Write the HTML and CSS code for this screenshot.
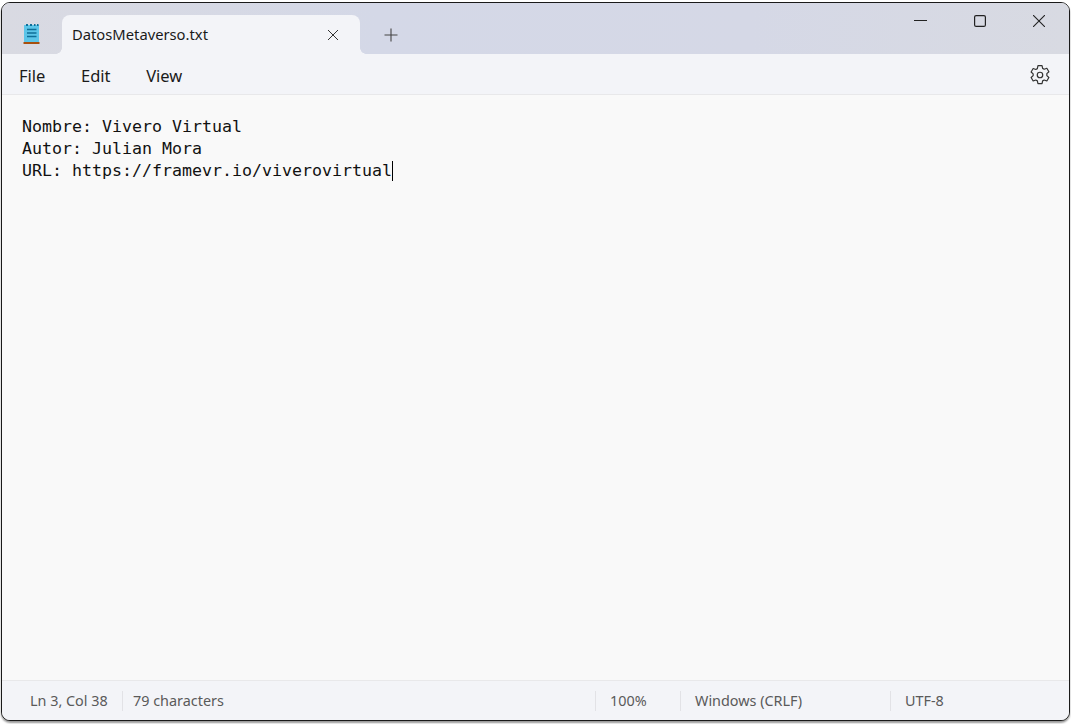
FILE: index.html
```html
<!DOCTYPE html>
<html lang="en">
<head>
<meta charset="utf-8">
<title>DatosMetaverso.txt</title>
<link rel="stylesheet" href="styles.css">
</head>
<body>
<div class="window">
  <header class="titlebar">
    <div class="app-icon">
      <svg width="18" height="22" viewBox="0 0 18 22">
        <rect x="1" y="2" width="15" height="17" fill="#5cc5e8"/>
        <rect x="0.500" y="19" width="16" height="2" fill="#a8500f"/>
        <path d="M3 1h2v2H3zM7 1h2v2H7zM11 1h1.500v2H11zM14 1h1.500v2H14z" fill="#0f6f98"/>
        <path d="M4 6.500h9.500M4 10h9.500M4 13.500h9.500" stroke="#0f6f98" stroke-width="1.500" fill="none"/>
      </svg>
    </div>
    <div class="tab">
      <span class="tab-title">DatosMetaverso.txt</span>
      <svg class="tab-close" width="12" height="12" viewBox="0 0 12 12"><path d="M1 1l10 10M11 1L1 11" stroke="#333" stroke-width="1" fill="none"/></svg>
    </div>
    <div class="new-tab">
      <svg width="14" height="14" viewBox="0 0 14 14"><path d="M7 0.500v13M0.500 7h13" stroke="#444" stroke-width="1.100" fill="none"/></svg>
    </div>
    <div class="caption">
      <button class="cap-btn"><svg width="13" height="12" viewBox="0 0 13 12"><path d="M0 5.500h13" stroke="#222" stroke-width="1.200"/></svg></button>
      <button class="cap-btn"><svg width="12" height="12" viewBox="0 0 12 12"><rect x="0.600" y="0.600" width="10.800" height="10.800" rx="1.500" fill="none" stroke="#222" stroke-width="1.200"/></svg></button>
      <button class="cap-btn"><svg width="12" height="12" viewBox="0 0 12 12"><path d="M0 0l12 12M12 0L0 12" stroke="#222" stroke-width="1.100" fill="none"/></svg></button>
    </div>
  </header>
  <nav class="menubar">
    <span class="menu-item">File</span>
    <span class="menu-item">Edit</span>
    <span class="menu-item">View</span>
    <svg class="gear" width="24" height="24" viewBox="0 0 20 20"><path d="M8.300 2.200h3.400l.5 2.300 1.300.7 2.200-.8 1.700 2.900-1.700 1.600v1.600l1.700 1.600-1.700 2.900-2.200-.8-1.300.7-.5 2.300H8.300l-.5-2.300-1.300-.7-2.200.8-1.700-2.900 1.700-1.600V9.100L2.600 7.500l1.700-2.900 2.200.8 1.300-.7z" fill="none" stroke="#333" stroke-width="1" stroke-linejoin="round"/><circle cx="10" cy="10" r="2.300" fill="none" stroke="#333" stroke-width="1"/></svg>
  </nav>
  <main class="editor">
    <div class="line">Nombre: Vivero Virtual</div>
    <div class="line">Autor: Julian Mora</div>
    <div class="line">URL: https://framevr.io/viverovirtual<span class="caret"></span></div>
  </main>
  <footer class="statusbar">
    <span class="cell cell-pos">Ln 3, Col 38</span>
    <span class="cell cell-chars">79 characters</span>
    <span class="cell cell-zoom">100%</span>
    <span class="cell cell-eol">Windows (CRLF)</span>
    <span class="cell cell-enc">UTF-8</span>
  </footer>
</div>
</body>
</html>
```
FILE: styles.css
```css
html, body {
  margin: 0;
  height: 100%;
  background: #fff;
  overflow: hidden;
}
body {
  padding: 2px 1px 3px;
  box-sizing: border-box;
  width: 1071px;
  height: 724px;
  font-family: "Noto Sans", "Open Sans", sans-serif;
}
.window {
  box-sizing: border-box;
  height: 719px;
  display: flex;
  flex-direction: column;
  border: 1px solid #1a1a1a;
  border-radius: 9px;
  overflow: hidden;
  background: #f9f9f9;
  box-shadow: 0 2px 2px #999;
}
.titlebar {
  height: 51px;
  flex: none;
  display: flex;
  align-items: flex-end;
  background: linear-gradient(90deg, #d9dae2 0%, #d4d8e7 35%, #d5d8e6 70%, #d8dae2 100%);
}
.app-icon {
  width: 60px;
  height: 51px;
  flex: none;
  display: flex;
  align-items: center;
  justify-content: center;
  box-sizing: border-box;
  padding: 11px 0 0;
}
.app-icon svg { margin-top: -1px; }
.tab {
  position: relative;
  width: 298px;
  height: 39px;
  flex: none;
  display: flex;
  align-items: center;
  justify-content: space-between;
  box-sizing: border-box;
  padding: 0 21px 0 10px;
  background: #f3f4f8;
  border-radius: 8px 8px 0 0;
}
.tab::before,
.tab::after {
  content: "";
  position: absolute;
  bottom: 0;
  width: 6px;
  height: 6px;
}
.tab::before {
  left: -6px;
  background: radial-gradient(circle at 0 0, transparent 5.500px, #f3f4f8 6px);
}
.tab::after {
  right: -6px;
  background: radial-gradient(circle at 100% 0, transparent 5.500px, #f3f4f8 6px);
}
.tab-title {
  font-size: 14.750px;
  color: #1a1a1a;
  padding-bottom: 2px;
}
.new-tab {
  width: 61px;
  height: 39px;
  display: flex;
  align-items: center;
  justify-content: center;
  margin-right: auto;
}
.caption { display: flex; align-self: flex-start; padding-top: 12px; padding-right: 1px; }
.cap-btn {
  width: 59px;
  height: 12px;
  padding: 0;
  border: 0;
  background: none;
  display: flex;
  justify-content: center;
}
.menubar {
  height: 41px;
  flex: none;
  display: flex;
  align-items: center;
  box-sizing: border-box;
  padding: 3px 17px 0 17px;
  gap: 35.600px;
  background: #f3f4f8;
  border-bottom: 1px solid #e8e8ea;
}
.menu-item {
  font-size: 16.500px;
  color: #1a1a1a;
}
.gear { margin-left: auto; margin-top: -2px; }
.editor {
  flex: 1;
  padding: 21px 20px 0;
  background: #f9f9f9;
  font-family: "DejaVu Sans Mono", "Liberation Mono", monospace;
  font-size: 16.610px;
  line-height: 22px;
  color: #111;
}
.line { white-space: pre; }
.caret {
  display: inline-block;
  width: 1px;
  height: 20px;
  background: #000;
  vertical-align: -5px;
}
.statusbar {
  height: 40px;
  flex: none;
  display: flex;
  align-items: center;
  background: #f3f4f8;
  border-top: 1px solid #e8e8ea;
  box-sizing: border-box;
  font-size: 14.400px;
  color: #5a5a5a;
}
.cell {
  box-sizing: border-box;
  height: 20px;
  line-height: 20px;
  padding-left: 14px;
  border-left: 1px solid #e2e2e6;
  white-space: nowrap;
}
.cell-pos { width: 120px; padding-left: 28px; border-left: 0; }
.cell-chars { width: 473px; padding-left: 10px; }
.cell-zoom { width: 85px; }
.cell-eol { width: 210px; }
.cell-enc { flex: 1; }
```
